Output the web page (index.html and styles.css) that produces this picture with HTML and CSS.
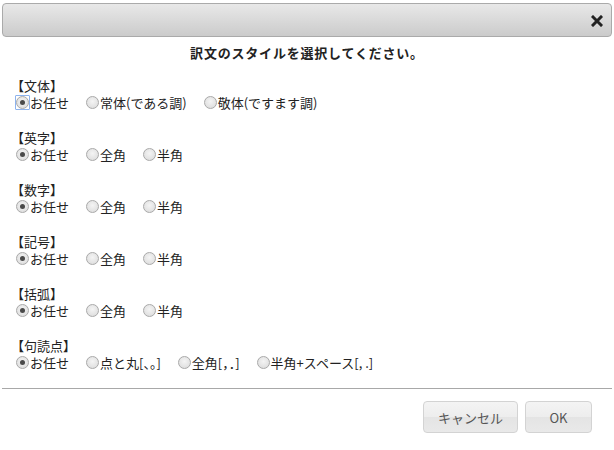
FILE: index.html
```html
<!DOCTYPE html>
<html lang="ja">
<head>
<meta charset="utf-8">
<link rel="stylesheet" href="styles.css">
</head>
<body>
<div class="dialog">
  <div class="titlebar">
    <span class="close" title="close">
      <svg width="12" height="12" viewBox="0 0 12 12"><path d="M2 2 L10 10 M10 2 L2 10" stroke="#222" stroke-width="3" stroke-linecap="square"/></svg>
    </span>
  </div>
  <div class="content">
    <p class="heading">訳文のスタイルを選択してください。</p>

    <div class="group">
      <div class="glabel">【文体】</div>
      <div class="opts">
        <label class="opt"><span class="radio checked focus"></span>お任せ</label>
        <label class="opt"><span class="radio"></span>常体(である調)</label>
        <label class="opt"><span class="radio"></span>敬体(ですます調)</label>
      </div>
    </div>

    <div class="group">
      <div class="glabel">【英字】</div>
      <div class="opts">
        <label class="opt"><span class="radio checked"></span>お任せ</label>
        <label class="opt"><span class="radio"></span>全角</label>
        <label class="opt"><span class="radio"></span>半角</label>
      </div>
    </div>

    <div class="group">
      <div class="glabel">【数字】</div>
      <div class="opts">
        <label class="opt"><span class="radio checked"></span>お任せ</label>
        <label class="opt"><span class="radio"></span>全角</label>
        <label class="opt"><span class="radio"></span>半角</label>
      </div>
    </div>

    <div class="group">
      <div class="glabel">【記号】</div>
      <div class="opts">
        <label class="opt"><span class="radio checked"></span>お任せ</label>
        <label class="opt"><span class="radio"></span>全角</label>
        <label class="opt"><span class="radio"></span>半角</label>
      </div>
    </div>

    <div class="group">
      <div class="glabel">【括弧】</div>
      <div class="opts">
        <label class="opt"><span class="radio checked"></span>お任せ</label>
        <label class="opt"><span class="radio"></span>全角</label>
        <label class="opt"><span class="radio"></span>半角</label>
      </div>
    </div>

    <div class="group">
      <div class="glabel">【句読点】</div>
      <div class="opts">
        <label class="opt"><span class="radio checked"></span>お任せ</label>
        <label class="opt"><span class="radio"></span>点と丸[、。]</label>
        <label class="opt"><span class="radio"></span>全角[，．]</label>
        <label class="opt"><span class="radio"></span>半角+スペース[, .]</label>
      </div>
    </div>
  </div>
  <div class="buttonpane">
    <button class="btn btn-cancel">キャンセル</button>
    <button class="btn btn-ok">OK</button>
  </div>
</div>
</body>
</html>
```

FILE: styles.css
```css
html, body {
  margin: 0;
  padding: 0;
  background: #fff;
}
body {
  font-family: "Noto Sans CJK JP", "Liberation Sans", sans-serif;
  font-size: 13px;
  color: #222;
}
.dialog {
  width: 614px;
  height: 450px;
  box-sizing: border-box;
  padding: 3px 2px 0 2px;
}
.titlebar {
  height: 34px;
  box-sizing: border-box;
  border: 1px solid #aaa;
  border-radius: 4px;
  background: linear-gradient(#e8e8e8, #cbcbcb);
  display: flex;
  align-items: center;
  justify-content: flex-end;
  padding-right: 8px;
}
.close {
  display: flex;
  width: 12px;
  height: 12px;
  margin-top: 2px;
}
.content {
  padding: 0 0 0 14px;
  height: 344px;
  box-sizing: border-box;
}
.heading {
  margin: 7px 0 16px 0;
  text-align: center;
  font-weight: bold;
  line-height: 17px;
  letter-spacing: 0.8px;
  padding-right: 14px;
}
.group {
  margin-bottom: 18px;
}
.glabel {
  line-height: 17px;
  height: 17px;
  margin-left: -5px;
}
.opts {
  display: flex;
  align-items: center;
  line-height: 17px;
  height: 17px;
}
.opt {
  display: flex;
  align-items: center;
  margin-right: 17px;
}
.radio {
  width: 13px;
  height: 13px;
  box-sizing: border-box;
  border-radius: 50%;
  border: 1px solid #a9a9a9;
  background: radial-gradient(circle at 50% 40%, #f4f4f4, #d9d9d9);
  margin: 0 1px 0 0;
  position: relative;
  flex: none;
}
.radio.checked::after {
  content: "";
  position: absolute;
  left: 3px;
  top: 3px;
  width: 5px;
  height: 5px;
  border-radius: 50%;
  background: #4a4a4a;
}
.radio.focus::before {
  content: "";
  position: absolute;
  left: -2px;
  top: -2px;
  width: 15px;
  height: 15px;
  box-sizing: border-box;
  border: 1px solid #8db3ee;
  border-radius: 1px;
}
.buttonpane {
  border-top: 1px solid #a8a8a8;
  display: flex;
  justify-content: flex-end;
  gap: 7px;
  padding: 12px 20px 0 0;
}
.btn {
  height: 32px;
  border: 1px solid #d3d3d3;
  border-radius: 4px;
  background: linear-gradient(#f4f4f4 0%, #ededed 50%, #e4e4e4 51%, #e9e9e9 100%);
  font-family: "Noto Sans CJK JP", "Liberation Sans", sans-serif;
  font-size: 13px;
  color: #555;
  padding: 0;
}
.btn-cancel {
  width: 95px;
}
.btn-ok {
  width: 67px;
}
```
